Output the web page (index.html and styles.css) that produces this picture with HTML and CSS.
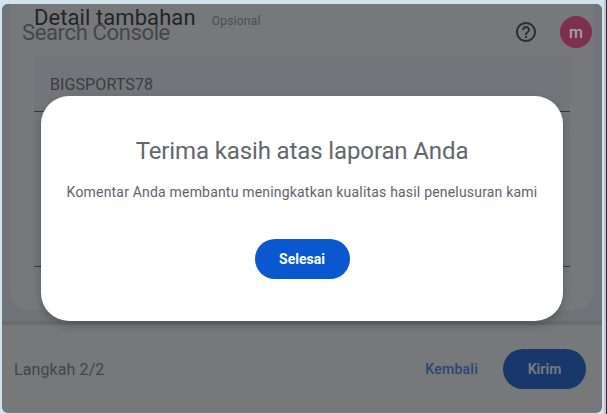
FILE: index.html
```html
<!DOCTYPE html>
<html lang="id">
<head>
<meta charset="utf-8">
<title>Search Console</title>
<link rel="stylesheet" href="styles.css">
</head>
<body>
<div class="stage">
  <main class="window">
    <section class="form">
      <div class="panel">
        <div class="section-head">
          <h2 class="section-title">Detail tambahan</h2>
          <span class="optional">Opsional</span>
        </div>
        <div class="field field-short"><span class="field-value">BIGSPORTS78</span></div>
        <div class="field field-tall"></div>
      </div>
    </section>
    <footer class="footer">
      <span class="step">Langkah 2/2</span>
      <div class="actions">
        <span class="back">Kembali</span>
        <span class="send">Kirim</span>
      </div>
    </footer>
    <header class="topbar">
      <span class="brand">Search Console</span>
      <div class="top-icons">
        <svg class="help" viewBox="0 0 24 24" width="24" height="24" aria-hidden="true">
          <path d="M11 18h2v-2h-2v2zm1-16C6.48 2 2 6.48 2 12s4.48 10 10 10 10-4.48 10-10S17.52 2 12 2zm0 18c-4.41 0-8-3.59-8-8s3.59-8 8-8 8 3.59 8 8-3.590 8-8 8zm0-14c-2.210 0-4 1.790-4 4h2c0-1.100.9-2 2-2s2 .9 2 2c0 2-3 1.750-3 5h2c0-2.250 3-2.500 3-5 0-2.210-1.790-4-4-4z"/>
        </svg>
        <span class="avatar">m</span>
      </div>
    </header>
  </main>
  <div class="edge"></div>
  <div class="dialog">
    <h1 class="dialog-title">Terima kasih atas laporan Anda</h1>
    <p class="dialog-text">Komentar Anda membantu meningkatkan kualitas hasil penelusuran kami</p>
    <span class="done">Selesai</span>
  </div>
</div>
</body>
</html>
```
FILE: styles.css
```css
* { box-sizing: border-box; }
html, body { margin: 0; height: 100%; overflow: hidden; }
body { background: #d3e3ee; font-family: Roboto, "Liberation Sans", sans-serif; }

.stage {
  position: relative;
  display: flex;
  width: 607px;
  height: 414px;
  padding: 4px 0 1px 2px;
}

.window {
  position: relative;
  flex: 0 0 600px;
  margin-right: 2px;
  display: flex;
  flex-direction: column;
  border-radius: 6px;
  background: #77787a;
  overflow: hidden;
}

.edge {
  flex: 0 0 3px;
  margin-top: -4px;
  margin-bottom: -1px;
  background: #b8c8d4;
  border-right: 1px solid #2b3038;
}

.form { flex: 0 0 321px; padding: 0 8px 11px; background: #707479; border-bottom: 4px solid #6a6b6e; }
.panel { height: 100%; padding: 0 24px; background: #77787a; border-radius: 0 0 20px 20px; }
.section-head { display: flex; align-items: baseline; height: 52px; gap: 16px; }
.section-title { margin: 0; font: 400 22px/28px Roboto, sans-serif; letter-spacing: .08px; color: #232426; }
.optional { font-size: 12px; color: #4c4d50; letter-spacing: .25px; }

.field { background: #73757a; border-bottom: 1px solid #353639; }
.field-short { height: 56px; padding: 18px 16px 0; }
.field-tall { height: 155px; }
.field-value { font-size: 16px; line-height: 22px; letter-spacing: .1px; color: #3a3b3e; }

.footer { flex: 1; display: flex; align-items: center; justify-content: space-between; padding: 0 16px 0 12px; }
.step { font-size: 16px; letter-spacing: .1px; color: #434447; }
.actions { display: flex; align-items: center; gap: 25px; }
.back { font-size: 14px; font-weight: 500; letter-spacing: .25px; color: #2a4478; }
.send { width: 83px; height: 40px; border-radius: 20px; background: #18376b; color: #76797f; font-size: 14px; font-weight: 700; display: flex; align-items: center; justify-content: center; }

.topbar { position: absolute; top: 0; left: 0; right: 0; height: 56px; display: flex; align-items: center; justify-content: space-between; padding: 0 10px 0 20px; }
.brand { font-size: 22px; letter-spacing: -.36px; color: #45464a; }
.top-icons { display: flex; align-items: center; gap: 22px; }
.help { fill: #2c2d30; }
.avatar { width: 32px; height: 32px; border-radius: 50%; background: #7d304d; color: #a6a3a6; font-size: 16px; font-weight: 500; display: flex; align-items: center; justify-content: center; }

.dialog {
  position: absolute;
  left: 41px;
  top: 96px;
  width: 522px;
  height: 225px;
  border-radius: 28px;
  background: #fff;
  box-shadow: 0 4px 8px rgba(40, 42, 46, .35);
  display: flex;
  flex-direction: column;
  align-items: center;
}
.dialog-title { margin: 39px 0 0; font: 400 24px/32px Roboto, sans-serif; letter-spacing: -.12px; color: #63676c; }
.dialog-text { margin: 15px 0 0; font-size: 14px; line-height: 20px; letter-spacing: .19px; color: #5f6368; }
.done { margin-top: 37px; width: 95px; height: 40px; border-radius: 20px; background: #0b57d0; color: #fff; font-size: 14px; font-weight: 700; display: flex; align-items: center; justify-content: center; }
```
